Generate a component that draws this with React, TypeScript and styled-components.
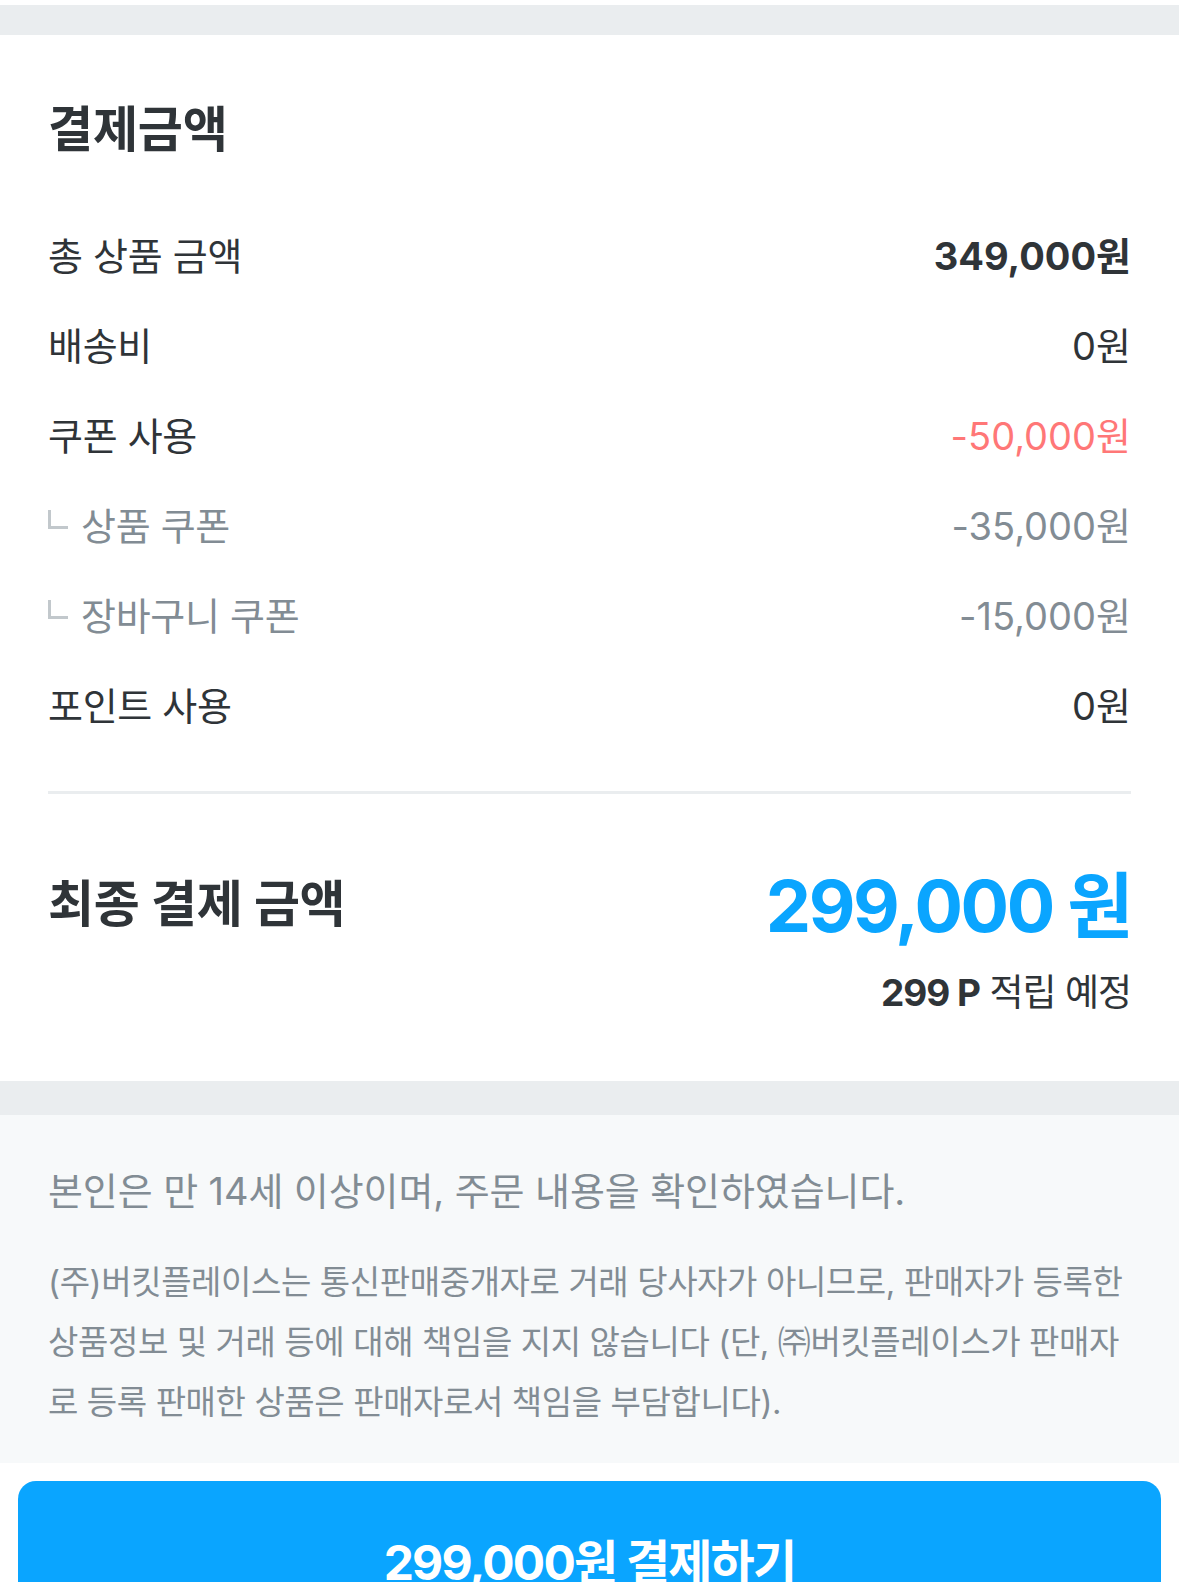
import React from 'react';
import styled, { createGlobalStyle } from 'styled-components';

const GlobalStyle = createGlobalStyle`
  body {
    margin: 0;
    background: #fff;
    font-family: Inter, "Noto Sans CJK KR", sans-serif;
    color: #2f3438;
  }
`;

const Page = styled.div`
  padding-top: 5px;
`;

const Band = styled.div<{ $h: number }>`
  height: ${p => p.$h}px;
  background: #eaedef;
`;

const Summary = styled.section`
  padding: 62px 48px 66px;
`;

const Title = styled.h2`
  margin: 0;
  font-size: 49px;
  line-height: 66px;
  font-weight: 700;
  letter-spacing: -0.2px;
`;

const Rows = styled.ul`
  list-style: none;
  margin: 45px 0 0;
  padding: 0;
`;

const Row = styled.li`
  display: flex;
  justify-content: space-between;
  align-items: center;
  height: 90px;
  font-size: 38px;
  letter-spacing: -0.3px;
`;

const Label = styled.span<{ $sub?: boolean }>`
  display: flex;
  align-items: center;
  color: ${p => (p.$sub ? '#828c94' : '#2f3438')};
`;

// the little "ㄴ" branch in front of sub items
const Branch = styled.i`
  display: block;
  box-sizing: border-box;
  width: 20px;
  height: 19px;
  margin: -8px 13px 0 0;
  border-left: 3px solid #c2c8cc;
  border-bottom: 3px solid #c2c8cc;
`;

type Tone = 'strong' | 'normal' | 'minus' | 'sub';

const toneColor: Record<Tone, string> = {
  strong: '#2f3438',
  normal: '#2f3438',
  minus: '#ff7777',
  sub: '#828c94',
};

const Value = styled.span<{ $tone: Tone }>`
  color: ${p => toneColor[p.$tone]};
  font-weight: ${p => (p.$tone === 'strong' ? 700 : 400)};
  letter-spacing: 0;
`;

const Divider = styled.hr`
  margin: 43px 0 0;
  border: 0;
  height: 3px;
  background: #eaedef;
`;

const TotalRow = styled.div`
  display: flex;
  justify-content: space-between;
  align-items: center;
  height: 90px;
  margin-top: 61px;
`;

const TotalLabel = styled.span`
  font-size: 50px;
  font-weight: 700;
  letter-spacing: -0.3px;
`;

const TotalAmount = styled.span`
  font-size: 72px;
  font-weight: 700;
  letter-spacing: -2.5px;
  color: #0aa5ff;
`;

const Earn = styled.p`
  margin: 25px 0 0;
  text-align: right;
  font-size: 37px;
  line-height: 45px;
  letter-spacing: -1px;
  b { font-weight: 700; }
`;

const Notice = styled.section`
  background: #f7f9fa;
  padding: 49px 48px 31px;
  color: #828c94;
`;

const Agree = styled.p`
  margin: 0;
  font-size: 38px;
  line-height: 54px;
  letter-spacing: -0.1px;
`;

const Disclaimer = styled.p`
  margin: 34px 0 0;
  font-size: 33px;
  line-height: 60px;
  letter-spacing: -0.4px;
`;

const PayButton = styled.button`
  display: block;
  width: calc(100% - 36px);
  height: 156px;
  margin: 18px 18px 0;
  border: 0;
  border-radius: 18px;
  background: #0aa5ff;
  color: #fff;
  font-family: Inter, "Noto Sans CJK KR", sans-serif;
  font-size: 48px;
  font-weight: 700;
  letter-spacing: -1.8px;
`;

const rows: { label: string; value: string; tone: Tone; sub?: boolean }[] = [
  { label: '총 상품 금액', value: '349,000원', tone: 'strong' },
  { label: '배송비', value: '0원', tone: 'normal' },
  { label: '쿠폰 사용', value: '-50,000원', tone: 'minus' },
  { label: '상품 쿠폰', value: '-35,000원', tone: 'sub', sub: true },
  { label: '장바구니 쿠폰', value: '-15,000원', tone: 'sub', sub: true },
  { label: '포인트 사용', value: '0원', tone: 'normal' },
];

export default function App() {
  return (
    <Page>
      <GlobalStyle />
      <Band $h={30} />
      <Summary>
        <Title>결제금액</Title>
        <Rows>
          {rows.map(r => (
            <Row key={r.label}>
              <Label $sub={r.sub}>
                {r.sub && <Branch />}
                {r.label}
              </Label>
              <Value $tone={r.tone}>{r.value}</Value>
            </Row>
          ))}
        </Rows>
        <Divider />
        <TotalRow>
          <TotalLabel>최종 결제 금액</TotalLabel>
          <TotalAmount>299,000 원</TotalAmount>
        </TotalRow>
        <Earn>
          <b>299 P</b> 적립 예정
        </Earn>
      </Summary>
      <Band $h={34} />
      <Notice>
        <Agree>본인은 만 14세 이상이며, 주문 내용을 확인하였습니다.</Agree>
        <Disclaimer>
          (주)버킷플레이스는 통신판매중개자로 거래 당사자가 아니므로, 판매자가 등록한
          <br />
          상품정보 및 거래 등에 대해 책임을 지지 않습니다 (단, ㈜버킷플레이스가 판매자
          <br />
          로 등록 판매한 상품은 판매자로서 책임을 부담합니다).
        </Disclaimer>
      </Notice>
      <PayButton>299,000원 결제하기</PayButton>
    </Page>
  );
}
